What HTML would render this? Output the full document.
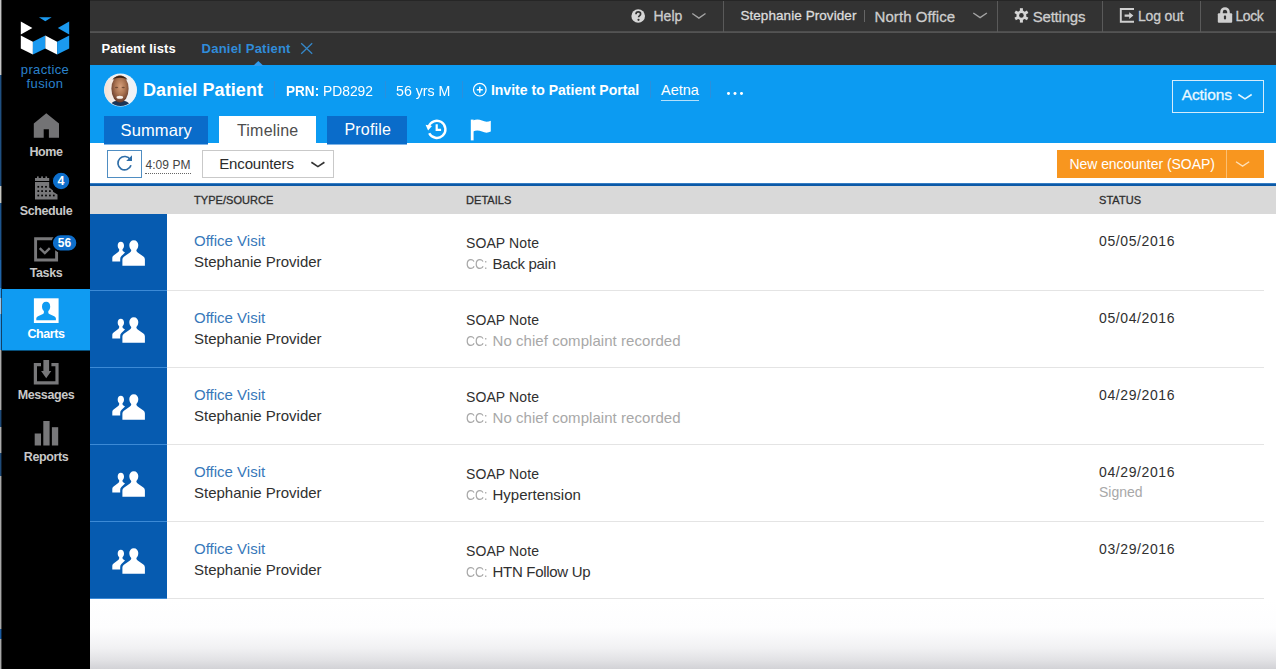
<!DOCTYPE html>
<html>
<head>
<meta charset="utf-8">
<title>Practice Fusion - Daniel Patient</title>
<style>
*{box-sizing:border-box;margin:0;padding:0}
html,body{width:1276px;height:669px;overflow:hidden;background:#fff;font-family:"Liberation Sans",sans-serif;}
.abs{position:absolute}
#root{position:relative;width:1276px;height:669px;overflow:hidden;background:#fff}
#side{left:0;top:0;width:90px;height:669px;background:#000}
#strip{left:0;top:0;width:1px;height:669px;background:linear-gradient(#c6c6c6 0px,#c6c6c6 75px,#1f4f80 75px,#1f4f80 186px,#c8c8c2 186px,#c8c8c2 203px,#1d548c 203px,#1d548c 260px,#1f64a8 260px,#1f64a8 288px,#2a9af0 288px,#2a9af0 298px,#9cc6ec 298px,#9cc6ec 314px,#2a9af0 314px,#2a9af0 350px,#ababab 350px,#ababab 410px,#1e4a78 410px,#1e4a78 427px,#ababab 427px,#ababab 453px,#1e4a78 453px,#1e4a78 476px,#a8a8a8 476px,#a8a8a8 629px,#1a5aa0 629px,#1a5aa0 639px,#a8a8a8 639px,#a8a8a8 669px)}
#strip2{left:1px;top:0;width:1px;height:669px;opacity:.42;background:linear-gradient(#c6c6c6 0px,#c6c6c6 75px,#1f4f80 75px,#1f4f80 186px,#c8c8c2 186px,#c8c8c2 203px,#1d548c 203px,#1d548c 260px,#1f64a8 260px,#1f64a8 288px,#2a9af0 288px,#2a9af0 298px,#9cc6ec 298px,#9cc6ec 314px,#2a9af0 314px,#2a9af0 350px,#ababab 350px,#ababab 410px,#1e4a78 410px,#1e4a78 427px,#ababab 427px,#ababab 453px,#1e4a78 453px,#1e4a78 476px,#a8a8a8 476px,#a8a8a8 629px,#1a5aa0 629px,#1a5aa0 639px,#a8a8a8 639px,#a8a8a8 669px)}
#topbar{left:90px;top:0;width:1186px;height:32px;background:#333}
#tabbar{left:90px;top:32px;width:1186px;height:33px;background:#313131}
#phead{left:90px;top:65px;width:1186px;height:78px;background:#0c9bf2}
#toolbar{left:90px;top:143px;width:1186px;height:40px;background:#fff}
#blueline{left:90px;top:183px;width:1186px;height:3px;background:linear-gradient(#4f93d4,#0c5aa8 45%,#0b57a3)}
#thead{left:90px;top:186px;width:1186px;height:28px;background:#d9d9d9}
.th{font-size:11px;color:#2e2e2e;letter-spacing:.05px;-webkit-text-stroke:.3px #2e2e2e}
.lnk{font-size:15px;color:#3878ba}
.tx{font-size:15px;color:#303030}
.soap{font-size:14px;letter-spacing:.1px}
.gr{color:#a8a8a8}
.cc{font-size:14.500px;letter-spacing:0;transform:scaleX(.86);transform-origin:0 50%}
.dt{font-size:14px;letter-spacing:.6px}
.sg{font-size:14px}
.lg{font-size:13px;color:#2a82cc;text-align:center;letter-spacing:.35px;padding-left:0}
.sl{left:1px;width:90px;text-align:center;font-size:12.500px;font-weight:700;color:#c8c8c8;letter-spacing:-.4px}
.bd{font-size:12px;font-weight:700;color:#fff;text-align:center}
.vs{top:0;width:1px;height:32px;background:#5a5a5a}
.tb{color:#cdcdcd;-webkit-text-stroke:.3px #cdcdcd}
.ps{top:81px;width:1px;height:17px;background:#2a8fdc}
.t{white-space:nowrap;line-height:1}
</style>
</head>
<body>
<div id="root">
<div id="side" class="abs"></div>
<div id="strip" class="abs"></div><div id="strip2" class="abs"></div>
<div id="topbar" class="abs"></div>
<div id="tabbar" class="abs"></div>
<div id="phead" class="abs"></div>
<div id="toolbar" class="abs"></div>
<div id="blueline" class="abs"></div>
<div id="thead" class="abs"></div>
<svg class="abs" style="left:0;top:0" width="90" height="480" viewBox="0 0 90 480">
<!-- logo -->
<polygon points="38.9,17.2 51.7,17.2 45.3,21.2" fill="#1b9af0"/>
<polygon points="20.8,21.5 32.4,28 20.8,34.4" fill="#fff"/>
<polygon points="69.2,21.5 57.8,28 69.2,34.4" fill="#1b9af0"/>
<polygon points="20.8,35.6 32.9,41.8 32.9,54.6 20.8,48.4" fill="#fff"/>
<polygon points="32.9,41.8 45.3,35.6 45.3,48.4 32.9,54.6" fill="#1b9af0"/>
<polygon points="45.3,35.6 57.1,41.8 57.1,54.6 45.3,48.4" fill="#fff"/>
<polygon points="57.1,41.8 69.2,35.6 69.2,48.4 57.1,54.6" fill="#1b9af0"/>
<!-- active bg -->
<rect x="2" y="289" width="88" height="61.500" fill="#0f9bf2"/>
<!-- home -->
<path d="M46.300 113.200L59 123.400V137.800H48.900V129.200H43.700V137.800H33.800V123.400Z" fill="#737375"/>
<!-- schedule -->
<g fill="#78787a"><rect x="35" y="178" width="14.200" height="3"/><rect x="37" y="176.400" width="1.700" height="2"/><rect x="41.200" y="176.400" width="1.700" height="2"/><rect x="45.400" y="176.400" width="1.700" height="2"/>
<path d="M35 182.100H49.200V187.600L53 190.600V191.800L57.500 194.600V199.500H35Z"/></g>
<g fill="#000"><rect x="37.45" y="185.95" width="1.700" height="1.700"/><rect x="41.25" y="185.95" width="1.700" height="1.700"/><rect x="45.15" y="185.95" width="1.700" height="1.700"/><rect x="37.45" y="190.25" width="1.700" height="1.700"/><rect x="41.25" y="190.25" width="1.700" height="1.700"/><rect x="45.15" y="190.25" width="1.700" height="1.700"/><rect x="49.05" y="190.25" width="1.700" height="1.700"/><rect x="37.45" y="194.65" width="1.700" height="1.700"/><rect x="41.25" y="194.65" width="1.700" height="1.700"/><rect x="45.15" y="194.65" width="1.700" height="1.700"/><rect x="49.05" y="194.65" width="1.700" height="1.700"/><rect x="52.95" y="194.65" width="1.700" height="1.700"/></g>
<circle cx="61.100" cy="181" r="8.800" fill="#0d6ecb" stroke="#000" stroke-width="1.200"/>
<!-- tasks -->
<path d="M35.600 238.700h21v21.300h-21z" fill="none" stroke="#78787a" stroke-width="2.900"/>
<path d="M39.700 248.200l5.100 4.900 5-5" fill="none" stroke="#78787a" stroke-width="2.400"/>
<rect x="52.100" y="234.500" width="25" height="16.800" rx="8.400" fill="#0d6ecb" stroke="#000" stroke-width="1.600"/>
<!-- charts -->
<rect x="33.900" y="298.300" width="24.700" height="24.700" fill="#fff"/>
<path d="M46.200 301.800c2.500 0 4 2 4 4.600 0 2-.8 3.800-1.900 4.700v1.400c0 .7.400 1.200 1 1.500l4.900 2.200c1 .5 1.700 1.300 1.700 2.400v1.600h-19.600v-1.600c0-1.100.7-1.900 1.700-2.400l4.900-2.200c.6-.3 1-.8 1-1.500v-1.400c-1.100-.9-1.900-2.700-1.900-4.700 0-2.600 1.600-4.600 4.200-4.600z" fill="#0f9bf2"/>
<!-- messages -->
<path d="M41 364.600h-5.600v18.300h21.600v-18.300h-5.600" fill="none" stroke="#78787a" stroke-width="3.200"/>
<path d="M43.400 360h5.700v11h2.200l-5.100 7.200-5.100-7.200h2.300z" fill="#78787a"/>
<!-- reports -->
<g fill="#78787a"><rect x="34.700" y="433.500" width="6.300" height="12"/><rect x="43.300" y="421" width="6.300" height="24.500"/><rect x="51.900" y="427.200" width="6.300" height="18.300"/></g>
</svg>
<div class="abs t lg" style="left:0;width:90px;top:62.500px">practice</div>
<div class="abs t lg" style="left:0;width:90px;top:77px">fusion</div>
<div class="abs t sl" style="top:146px">Home</div>
<div class="abs t sl" style="top:205px">Schedule</div>
<div class="abs t sl" style="top:267px">Tasks</div>
<div class="abs t sl" style="top:328px;color:#fff">Charts</div>
<div class="abs t sl" style="top:389px">Messages</div>
<div class="abs t sl" style="top:451px">Reports</div>
<div class="abs t bd" style="left:52.300px;width:17.600px;top:174.500px;font-size:12.500px">4</div>
<div class="abs t bd" style="left:51.600px;width:25.600px;top:237px">56</div>
<!--SIDEBAR-END-->
<div class="abs" style="left:90px;top:31px;width:1186px;height:2px;background:linear-gradient(#4b4b4b,#565656)"></div>
<div class="abs vs" style="left:723px"></div><div class="abs vs" style="left:997px"></div><div class="abs vs" style="left:1102px"></div><div class="abs vs" style="left:1200px"></div>
<div class="abs" style="left:864px;top:10px;width:1px;height:12px;background:#666"></div>
<svg class="abs" style="left:620px;top:0" width="656" height="32" viewBox="620 0 656 32">
<circle cx="638.200" cy="16" r="6.800" fill="#d6d6d6"/>
<path d="M636 14.200c0-1.400 1-2.300 2.300-2.300s2.300.8 2.300 2c0 1.600-2 1.700-2 3.400" fill="none" stroke="#333" stroke-width="1.700"/><circle cx="638.500" cy="19.800" r="1.100" fill="#333"/>
<path d="M692.300 13.500l6.600 4.600 6.600-4.600" fill="none" stroke="#a4a4a4" stroke-width="1.400"/>
<path d="M973.300 13l6.800 4.600 6.800-4.600" fill="none" stroke="#a4a4a4" stroke-width="1.400"/>
<!-- gear -->
<g transform="translate(1021.400 15.400)" fill="#d6d6d6"><circle r="4.900"/><g id="tth"><rect x="-1.500" y="-7.200" width="3" height="14.400"/></g><use href="#tth" transform="rotate(60)"/><use href="#tth" transform="rotate(120)"/><circle r="2.300" fill="#333"/></g>
<!-- logout -->
<path d="M1134 9h-13.200v12.800h13.200" fill="none" stroke="#cfcfcf" stroke-width="1.900"/>
<path d="M1124.600 14.500h4.600v-2.300l4.200 3.400-4.200 3.400v-2.300h-4.600z" fill="#cfcfcf"/>
<!-- lock -->
<path d="M1221.500 14v-2a3.500 3.500 0 0 1 7 0v2" fill="none" stroke="#cfcfcf" stroke-width="2.600"/>
<rect x="1217.800" y="13.200" width="14.400" height="9.600" rx="1" fill="#cfcfcf"/><rect x="1223.900" y="15.600" width="2.200" height="3.800" rx=".8" fill="#333"/>
</svg>
<div class="abs t tb" style="left:653.500px;top:9px;font-size:14px">Help</div>
<div class="abs t tb" style="left:740.400px;top:8.500px;font-size:13.500px;letter-spacing:.07px;color:#dcdcdc;-webkit-text-stroke:.3px #dcdcdc">Stephanie Provider</div>
<div class="abs t tb" style="left:874.500px;top:9px;font-size:15px;letter-spacing:.08px">North Office</div>
<div class="abs t tb" style="left:1032.700px;top:8.500px;font-size:15px;letter-spacing:-.2px">Settings</div>
<div class="abs t tb" style="left:1138px;top:9px;font-size:14px;letter-spacing:-.17px">Log out</div>
<div class="abs t tb" style="left:1235.400px;top:9px;font-size:14px;letter-spacing:-.39px">Lock</div>
<div class="abs" style="left:90px;top:0;width:1186px;height:1px;background:#262626"></div>
<!--TOPBAR-END-->
<div class="abs t" style="left:101.500px;top:41.500px;font-size:13px;font-weight:700;color:#fff;letter-spacing:.1px">Patient lists</div>
<div class="abs t" style="left:201.600px;top:41.500px;font-size:13px;font-weight:700;color:#308cd9;letter-spacing:.22px">Daniel Patient</div>
<svg class="abs" style="left:298px;top:40px" width="18" height="28" viewBox="298 40 18 28"><path d="M301.200 43.200l11 10.600M312.200 43.200l-11 10.600" stroke="#3587c8" stroke-width="1.300" fill="none"/></svg>
<svg class="abs" style="left:250px;top:60px" width="18" height="8" viewBox="250 60 18 8"><path d="M253 66l5.300-5 5.300 5z" fill="#2f9cf0"/></svg>
<!--TABS-END-->
<svg class="abs" style="left:103px;top:73px" width="35" height="34" viewBox="0 0 35 34">
<defs><radialGradient id="fc" cx="52%" cy="42%" r="60%"><stop offset="0" stop-color="#d6a07c"/><stop offset=".5" stop-color="#aa7351"/><stop offset="1" stop-color="#63392a"/></radialGradient>
<linearGradient id="bgv" x1="0" x2="1"><stop offset="0" stop-color="#f6dfd0"/><stop offset=".35" stop-color="#f4f1ef"/><stop offset="1" stop-color="#eef3f8"/></linearGradient>
<clipPath id="avc"><circle cx="17.500" cy="17" r="16"/></clipPath><filter id="avb" x="-20%" y="-20%" width="140%" height="140%"><feGaussianBlur stdDeviation=".7"/></filter></defs>
<circle cx="17.500" cy="17" r="16.500" fill="#dff1fd"/>
<g clip-path="url(#avc)"><rect width="35" height="34" fill="url(#bgv)"/>
<g filter="url(#avb)"><path d="M7 34c.5-4.500 4-6.500 10-6.500s10 2 10.500 6.500z" fill="#1c3554"/>
<ellipse cx="17" cy="15.800" rx="8.600" ry="13.600" fill="url(#fc)"/>
<path d="M9.500 7c1.500-5.500 13.500-5.500 15 0-3-3-12-3-15 0z" fill="#3d2417"/>
<ellipse cx="16.800" cy="24.300" rx="3.300" ry="1.500" fill="#f7efe9"/>
<ellipse cx="13.600" cy="14.500" rx="1.600" ry=".8" fill="#3b2216" opacity=".55"/><ellipse cx="20.200" cy="14.500" rx="1.600" ry=".8" fill="#3b2216" opacity=".55"/>
</g></g></svg>
<div class="abs t" style="left:143px;top:80.500px;font-size:18px;font-weight:700;color:#fff;letter-spacing:.07px">Daniel Patient</div>
<div class="abs ps" style="left:274px"></div><div class="abs ps" style="left:385px"></div><div class="abs ps" style="left:462px"></div><div class="abs ps" style="left:650px"></div><div class="abs ps" style="left:710px"></div>
<div class="abs t" style="left:285.800px;top:82.500px;font-size:15.500px;font-weight:700;color:#fff;transform:scaleX(.876);transform-origin:0 50%">PRN:</div>
<div class="abs t" style="left:323px;top:82.500px;font-size:15.500px;color:#fff;transform:scaleX(.893);transform-origin:0 50%">PD8292</div>
<div class="abs t" style="left:396.400px;top:82.500px;font-size:15.500px;color:#fff;transform:scaleX(.916);transform-origin:0 50%">56 yrs M</div>
<svg class="abs" style="left:470px;top:80px" width="20" height="20" viewBox="470 80 20 20"><circle cx="479.800" cy="89.700" r="6.300" fill="none" stroke="#fff" stroke-width="1.200"/><path d="M476.800 89.700h6M479.800 86.700v6" stroke="#fff" stroke-width="1.500"/></svg>
<div class="abs t" style="left:490.900px;top:82.500px;font-size:14px;font-weight:700;color:#fff;letter-spacing:.02px">Invite to Patient Portal</div>
<div class="abs t" style="left:661px;top:82.500px;font-size:14.500px;color:#fff;letter-spacing:0">Aetna</div>
<div class="abs" style="left:661px;top:100px;width:37.500px;height:1px;background:#b4e0fb"></div>
<div class="abs" style="left:727px;top:92px;width:2.800px;height:2.800px;border-radius:50%;background:#fff;box-shadow:6.500px 0 0 #fff,13px 0 0 #fff"></div>
<div class="abs" style="left:1172px;top:79.500px;width:92px;height:33.500px;border:1.500px solid #d5ecfb"></div>
<div class="abs t" style="left:1181.700px;top:87px;font-size:15.500px;color:#eaf8ff;letter-spacing:-.1px;-webkit-text-stroke:.3px #eaf8ff">Actions</div>
<svg class="abs" style="left:1236px;top:88px" width="20" height="14" viewBox="1236 88 20 14"><path d="M1238.300 94.500l6.700 4.400 6.700-4.400" fill="none" stroke="#e4f7ff" stroke-width="1.600"/></svg>
<div class="abs" style="left:104px;top:116px;width:104px;height:28px;background:#0a6cca"></div>
<div class="abs" style="left:219px;top:116px;width:97px;height:28px;background:#fff"></div>
<div class="abs" style="left:327px;top:116px;width:80px;height:28px;background:#0a6cca"></div>
<div class="abs t" style="left:120.600px;top:121.500px;font-size:16.500px;color:#fff;letter-spacing:.1px">Summary</div>
<div class="abs t" style="left:237px;top:123px;font-size:16px;color:#4d4d4d;letter-spacing:.19px">Timeline</div>
<div class="abs t" style="left:344.500px;top:121.500px;font-size:16px;color:#fff;letter-spacing:.16px">Profile</div>
<svg class="abs" style="left:424px;top:116px" width="72" height="28" viewBox="424 116 72 28">
<path d="M428.600 126.800a8.600 8.600 0 1 1 .6 6.500" fill="none" stroke="#fff" stroke-width="2.400"/><path d="M425.600 124.800l6.400 1.300-3.900 4.500z" fill="#fff"/>
<path d="M436.700 124.300v5.500h4.400" fill="none" stroke="#fff" stroke-width="2.200"/>
<path d="M470.800 119.600h2.800v20.800h-2.800z" fill="#fff"/><path d="M473 120.600c3-1.600 6-1.500 9 0s6 1.500 8.800.1v10.900c-2.800 1.400-5.800 1.400-8.800 0s-6-1.600-9-.1z" fill="#fff"/>
</svg>
<div class="abs" style="left:104px;top:144px;width:104px;height:1px;background:#7fb3e6"></div><div class="abs" style="left:327px;top:144px;width:80px;height:1px;background:#7fb3e6"></div>
<!--PHEAD-END-->
<div class="abs" style="left:107px;top:150px;width:35px;height:28px;border:1px solid #4f8dc2;background:#fff"></div>
<svg class="abs" style="left:114px;top:154px" width="22" height="20" viewBox="114 154 22 20"><path d="M130.300 159.600a6.700 6.700 0 1 0 .7 5.700" fill="none" stroke="#2f6ea8" stroke-width="1.700"/><path d="M132 155.200v5.800h-5.800z" fill="#2f6ea8"/></svg>
<div class="abs t" style="left:145.400px;top:159px;font-size:12px;color:#444;letter-spacing:.09px">4:09 PM</div>
<div class="abs" style="left:145px;top:173px;width:46px;height:0;border-top:1px dotted #666"></div>
<div class="abs" style="left:202px;top:150px;width:132px;height:28px;border:1px solid #c9c9c9;background:#fff"></div>
<div class="abs t" style="left:219.200px;top:156px;font-size:15px;color:#2b2b2b;letter-spacing:-.13px">Encounters</div>
<svg class="abs" style="left:308px;top:158px" width="20" height="14" viewBox="308 158 20 14"><path d="M311.400 162.300l6.500 4.300 6.500-4.300" fill="none" stroke="#333" stroke-width="1.700"/></svg>
<div class="abs" style="left:1057px;top:150px;width:207px;height:28px;background:#fbbf73"></div><div class="abs" style="left:1057px;top:150px;width:169px;height:28px;background:#f8961f"></div>
<div class="abs" style="left:1227px;top:150px;width:37px;height:28px;background:#f8961f"></div>
<div class="abs t" style="left:1069.400px;top:157px;font-size:14px;color:#fff;letter-spacing:-.04px">New encounter (SOAP)</div>
<svg class="abs" style="left:1233px;top:158px" width="20" height="14" viewBox="1233 158 20 14"><path d="M1236 161.800l6.600 4.300 6.600-4.300" fill="none" stroke="#fde0b8" stroke-width="1.300"/></svg>
<!--TOOLBAR-END-->
<div class="abs" style="left:90px;top:214px;width:77px;height:384px;background:#065bb0"></div>
<div class="abs t th" style="left:194px;top:195px">TYPE/SOURCE</div><div class="abs t th" style="left:466px;top:195px">DETAILS</div><div class="abs t th" style="left:1099px;top:195px">STATUS</div>
<div class="abs" style="left:90px;top:290px;width:77px;height:1px;background:#3c8ad6"></div><div class="abs" style="left:167px;top:290px;width:1097px;height:1px;background:#e4e4e4"></div>
<svg class="abs" style="left:112px;top:240px" width="34" height="27" viewBox="0 0 34 27"><g fill="#fff"><path d="M8.800 1.700C10.700 1.700 12 3.300 12 5.400C12 7 11.400 8.400 10.500 9.200L10.500 10.300Q10.700 11 11.500 11.500L13 12.500L9.400 16.100Q8.200 17.300 8.200 19L8.200 21.600L.3 21.600L.3 17.800Q.3 16.300 1.600 15.500L6.200 12Q7.100 11.300 7.200 10.300L7.200 9.200C6.300 8.400 5.700 7 5.700 5.400C5.700 3.300 6.900 1.700 8.800 1.700Z"/><path d="M21.800 .2C24.500 .2 26.300 2.300 26.300 5.100C26.300 7.200 25.400 9.100 24.400 10L24.400 10.800Q24.600 11.800 26 12.700L31.400 16.500Q32.900 17.600 32.900 19.400L32.900 25.700L10.400 25.700L10.400 19.600Q10.400 17.800 11.900 16.700L17.600 12.700Q19 11.800 19.200 10.800L19.200 10C18.200 9.100 17.300 7.200 17.300 5.100C17.300 2.300 19.100 .2 21.800 .2Z"/></g></svg>
<div class="abs t lnk" style="left:194px;top:233px">Office Visit</div><div class="abs t tx" style="left:194px;top:254px">Stephanie Provider</div>
<div class="abs t tx soap" style="left:466px;top:236px">SOAP Note</div><div class="abs t tx gr cc" style="left:466px;top:256.5px">CC:</div><div class="abs t tx" style="left:492.500px;top:256px;letter-spacing:-0.3px">Back pain</div>
<div class="abs t tx dt" style="left:1099px;top:234px">05/05/2016</div>
<div class="abs" style="left:90px;top:367px;width:77px;height:1px;background:#3c8ad6"></div><div class="abs" style="left:167px;top:367px;width:1097px;height:1px;background:#e4e4e4"></div>
<svg class="abs" style="left:112px;top:317px" width="34" height="27" viewBox="0 0 34 27"><g fill="#fff"><path d="M8.800 1.700C10.700 1.700 12 3.300 12 5.400C12 7 11.400 8.400 10.500 9.200L10.500 10.300Q10.700 11 11.500 11.500L13 12.500L9.400 16.100Q8.200 17.300 8.200 19L8.200 21.600L.3 21.600L.3 17.800Q.3 16.300 1.600 15.500L6.200 12Q7.100 11.300 7.200 10.300L7.200 9.200C6.300 8.400 5.700 7 5.700 5.400C5.700 3.300 6.900 1.700 8.800 1.700Z"/><path d="M21.800 .2C24.500 .2 26.300 2.300 26.300 5.100C26.300 7.200 25.400 9.100 24.400 10L24.400 10.800Q24.600 11.800 26 12.700L31.400 16.500Q32.900 17.600 32.900 19.400L32.900 25.700L10.400 25.700L10.400 19.600Q10.400 17.800 11.900 16.700L17.600 12.700Q19 11.800 19.200 10.800L19.200 10C18.200 9.100 17.300 7.200 17.300 5.100C17.300 2.300 19.100 .2 21.800 .2Z"/></g></svg>
<div class="abs t lnk" style="left:194px;top:310px">Office Visit</div><div class="abs t tx" style="left:194px;top:331px">Stephanie Provider</div>
<div class="abs t tx soap" style="left:466px;top:313px">SOAP Note</div><div class="abs t tx gr cc" style="left:466px;top:333.5px">CC:</div><div class="abs t tx gr" style="left:492.500px;top:333px;letter-spacing:0.05px">No chief complaint recorded</div>
<div class="abs t tx dt" style="left:1099px;top:311px">05/04/2016</div>
<div class="abs" style="left:90px;top:444px;width:77px;height:1px;background:#3c8ad6"></div><div class="abs" style="left:167px;top:444px;width:1097px;height:1px;background:#e4e4e4"></div>
<svg class="abs" style="left:112px;top:394px" width="34" height="27" viewBox="0 0 34 27"><g fill="#fff"><path d="M8.800 1.700C10.700 1.700 12 3.300 12 5.400C12 7 11.400 8.400 10.500 9.200L10.500 10.300Q10.700 11 11.500 11.500L13 12.500L9.400 16.100Q8.200 17.300 8.200 19L8.200 21.600L.3 21.600L.3 17.800Q.3 16.300 1.600 15.500L6.200 12Q7.100 11.300 7.200 10.300L7.200 9.200C6.300 8.400 5.700 7 5.700 5.400C5.700 3.300 6.900 1.700 8.800 1.700Z"/><path d="M21.800 .2C24.500 .2 26.300 2.300 26.300 5.100C26.300 7.200 25.400 9.100 24.400 10L24.400 10.800Q24.600 11.800 26 12.700L31.400 16.500Q32.900 17.600 32.900 19.400L32.900 25.700L10.400 25.700L10.400 19.600Q10.400 17.800 11.900 16.700L17.600 12.700Q19 11.800 19.200 10.800L19.200 10C18.200 9.100 17.300 7.200 17.300 5.100C17.300 2.300 19.100 .2 21.800 .2Z"/></g></svg>
<div class="abs t lnk" style="left:194px;top:387px">Office Visit</div><div class="abs t tx" style="left:194px;top:408px">Stephanie Provider</div>
<div class="abs t tx soap" style="left:466px;top:390px">SOAP Note</div><div class="abs t tx gr cc" style="left:466px;top:410.5px">CC:</div><div class="abs t tx gr" style="left:492.500px;top:410px;letter-spacing:0.05px">No chief complaint recorded</div>
<div class="abs t tx dt" style="left:1099px;top:388px">04/29/2016</div>
<div class="abs" style="left:90px;top:521px;width:77px;height:1px;background:#3c8ad6"></div><div class="abs" style="left:167px;top:521px;width:1097px;height:1px;background:#e4e4e4"></div>
<svg class="abs" style="left:112px;top:471px" width="34" height="27" viewBox="0 0 34 27"><g fill="#fff"><path d="M8.800 1.700C10.700 1.700 12 3.300 12 5.400C12 7 11.400 8.400 10.500 9.200L10.500 10.300Q10.700 11 11.500 11.500L13 12.500L9.400 16.100Q8.200 17.300 8.200 19L8.200 21.600L.3 21.600L.3 17.800Q.3 16.300 1.600 15.500L6.200 12Q7.100 11.300 7.200 10.300L7.200 9.200C6.300 8.400 5.700 7 5.700 5.400C5.700 3.300 6.900 1.700 8.800 1.700Z"/><path d="M21.800 .2C24.500 .2 26.300 2.300 26.300 5.100C26.300 7.200 25.400 9.100 24.400 10L24.400 10.800Q24.600 11.800 26 12.700L31.400 16.500Q32.900 17.600 32.900 19.400L32.900 25.700L10.400 25.700L10.400 19.600Q10.400 17.800 11.900 16.700L17.600 12.700Q19 11.800 19.200 10.800L19.200 10C18.200 9.100 17.300 7.200 17.300 5.100C17.300 2.300 19.100 .2 21.800 .2Z"/></g></svg>
<div class="abs t lnk" style="left:194px;top:464px">Office Visit</div><div class="abs t tx" style="left:194px;top:485px">Stephanie Provider</div>
<div class="abs t tx soap" style="left:466px;top:467px">SOAP Note</div><div class="abs t tx gr cc" style="left:466px;top:487.5px">CC:</div><div class="abs t tx" style="left:492.500px;top:487px;letter-spacing:0px">Hypertension</div>
<div class="abs t tx dt" style="left:1099px;top:465px">04/29/2016</div><div class="abs t tx gr sg" style="left:1099px;top:485px">Signed</div>
<div class="abs" style="left:90px;top:598px;width:77px;height:1px;background:#3c8ad6"></div><div class="abs" style="left:167px;top:598px;width:1097px;height:1px;background:#e4e4e4"></div>
<svg class="abs" style="left:112px;top:548px" width="34" height="27" viewBox="0 0 34 27"><g fill="#fff"><path d="M8.800 1.700C10.700 1.700 12 3.300 12 5.400C12 7 11.400 8.400 10.500 9.200L10.500 10.300Q10.700 11 11.500 11.500L13 12.500L9.400 16.100Q8.200 17.300 8.200 19L8.200 21.600L.3 21.600L.3 17.800Q.3 16.300 1.600 15.500L6.200 12Q7.100 11.300 7.200 10.300L7.200 9.200C6.300 8.400 5.700 7 5.700 5.400C5.700 3.300 6.900 1.700 8.800 1.700Z"/><path d="M21.800 .2C24.500 .2 26.300 2.300 26.300 5.100C26.300 7.200 25.400 9.100 24.400 10L24.400 10.800Q24.600 11.800 26 12.700L31.400 16.500Q32.900 17.600 32.900 19.400L32.900 25.700L10.400 25.700L10.400 19.600Q10.400 17.800 11.900 16.700L17.600 12.700Q19 11.800 19.200 10.800L19.200 10C18.200 9.100 17.300 7.200 17.300 5.100C17.300 2.300 19.100 .2 21.800 .2Z"/></g></svg>
<div class="abs t lnk" style="left:194px;top:541px">Office Visit</div><div class="abs t tx" style="left:194px;top:562px">Stephanie Provider</div>
<div class="abs t tx soap" style="left:466px;top:544px">SOAP Note</div><div class="abs t tx gr cc" style="left:466px;top:564.5px">CC:</div><div class="abs t tx" style="left:492.500px;top:564px;letter-spacing:-0.3px">HTN Follow Up</div>
<div class="abs t tx dt" style="left:1099px;top:542px">03/29/2016</div>
<div class="abs" style="left:90px;top:600px;width:1186px;height:69px;background:linear-gradient(#fff 0,#fdfdfe 28px,#f1f1f3 48px,#e2e2e5 60px,#d2d2d6 69px)"></div>
<!--TABLE-END-->
</div>
</body>
</html>
